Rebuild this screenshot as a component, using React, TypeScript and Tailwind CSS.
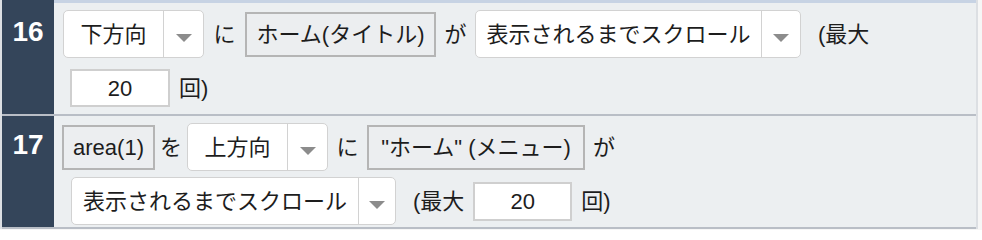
import React from 'react';

const FONT = { fontFamily: '"Liberation Sans", "Noto Sans CJK JP", sans-serif' };

function Arrow() {
  return (
    <svg width="16" height="8" viewBox="0 0 16 8" className="mt-[7px]">
      <path d="M0 0H16L8 8Z" fill="#8c8c8c" />
    </svg>
  );
}

function Select({ label, textW, arrowW }: { label: string; textW: number; arrowW: number }) {
  return (
    <div className="flex h-[48px] shrink-0 rounded-[5px] border-[1.5px] border-[#d2d2d2] bg-white">
      <div className="flex items-center justify-center whitespace-nowrap" style={{ width: textW }}>
        {label}
      </div>
      <div className="flex items-center justify-center border-l-[1.5px] border-[#d2d2d2]" style={{ width: arrowW }}>
        <Arrow />
      </div>
    </div>
  );
}

function Box({ label, w }: { label: string; w: number }) {
  return (
    <div
      className="flex h-[45px] shrink-0 items-center justify-center whitespace-nowrap border-2 border-[#b5b5b5] bg-[#eceef0]"
      style={{ width: w }}
    >
      {label}
    </div>
  );
}

function Count({ w, h }: { w: number; h: number }) {
  return (
    <div
      className="flex shrink-0 items-center justify-center border-2 border-[#cfcfcf] bg-white"
      style={{ width: w, height: h }}
    >
      20
    </div>
  );
}

function Word({ text, w }: { text: string; w: number }) {
  return (
    <span className="shrink-0 whitespace-nowrap text-center" style={{ width: w }}>
      {text}
    </span>
  );
}

function Row({ num, children }: { num: string; children: React.ReactNode }) {
  return (
    <div className="flex h-[113px] border-b-2 border-[#b9bec6]">
      <div className="w-[52px] shrink-0 bg-[#34455a] pt-[5px] text-center text-[28px] font-bold leading-[48px] text-white">
        {num}
      </div>
      <div className="flex flex-1 flex-col gap-[6px] bg-[#eceff1] pt-[7px]">{children}</div>
    </div>
  );
}

export default function App() {
  return (
    <div className="h-[230px] w-[982px] overflow-hidden bg-[#f6f6f6] text-[22px] text-[#1d1d1d]" style={FONT}>
      <div className="w-[978px] border-x-2 border-[#dcdfe3]">
        <div className="flex h-[3px]">
          <div className="w-[52px] bg-[#34455a]" />
          <div className="flex-1 bg-[#c7d3e4]" />
        </div>

        <Row num="16">
          <div className="flex h-[48px] items-center pl-[9px]">
            <Select label="下方向" textW={99} arrowW={40} />
            <Word text="に" w={41} />
            <Box label="ホーム(タイトル)" w={191} />
            <Word text="が" w={39} />
            <Select label="表示されるまでスクロール" textW={285} arrowW={39} />
            <span className="ml-[17px] whitespace-nowrap">(最大</span>
          </div>
          <div className="flex h-[48px] items-center pl-[16px]">
            <Count w={100} h={38} />
            <span className="ml-[9px] whitespace-nowrap">回)</span>
          </div>
        </Row>

        <Row num="17">
          <div className="flex h-[48px] items-center pl-[8px]">
            <Box label="area(1)" w={93} />
            <Word text="を" w={32} />
            <Select label="上方向" textW={99} arrowW={40} />
            <Word text="に" w={39} />
            <Box label={'"ホーム" (メニュー)'} w={218} />
            <span className="ml-[8px] whitespace-nowrap">が</span>
          </div>
          <div className="flex h-[48px] items-center pl-[17px]">
            <Select label="表示されるまでスクロール" textW={286} arrowW={37} />
            <span className="ml-[17px] whitespace-nowrap">(最大</span>
            <div className="ml-[9px]">
              <Count w={99} h={39} />
            </div>
            <span className="ml-[9px] whitespace-nowrap">回)</span>
          </div>
        </Row>
      </div>
    </div>
  );
}
